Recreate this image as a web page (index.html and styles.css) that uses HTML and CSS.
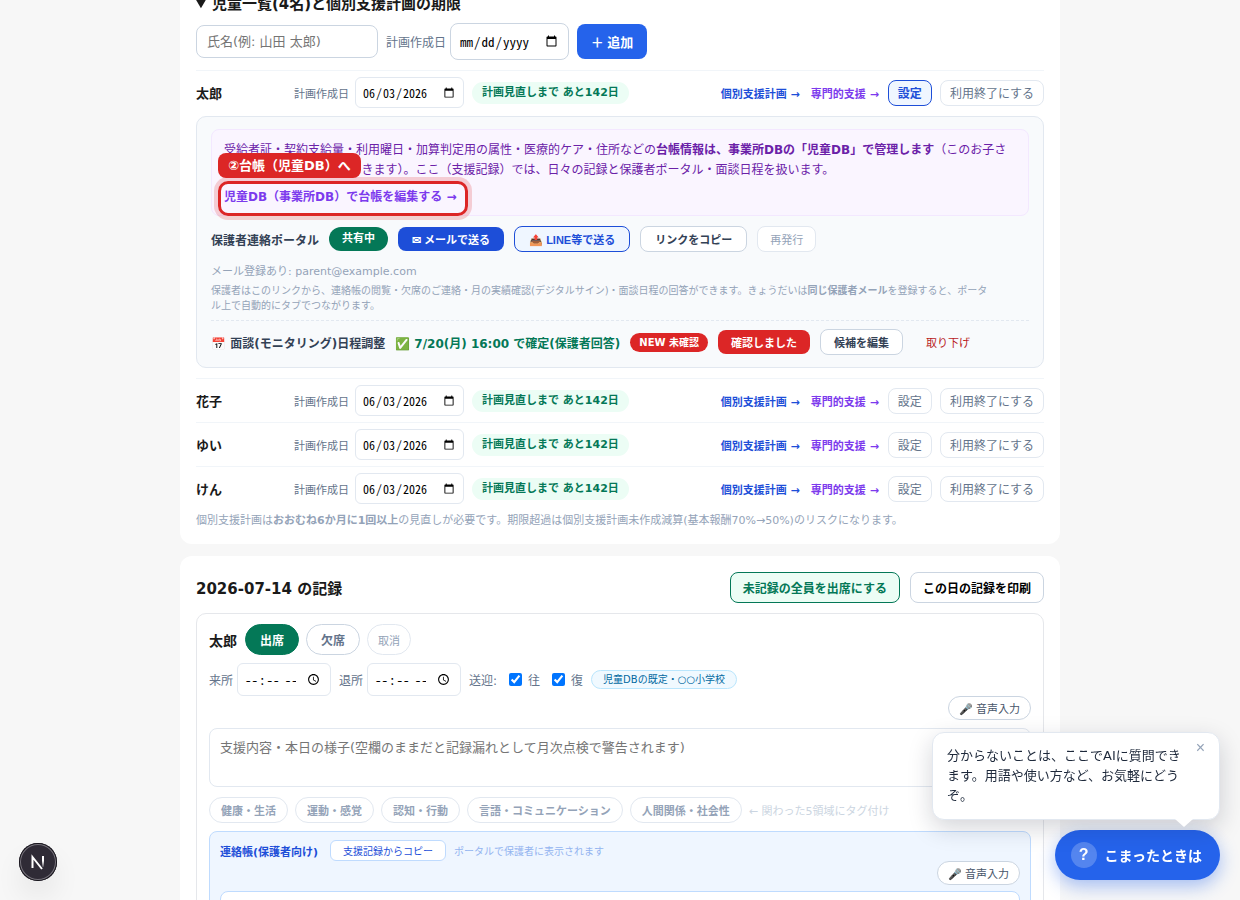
FILE: index.html
```html
<!DOCTYPE html>
<html lang="ja">
<head>
<meta charset="utf-8">
<meta name="viewport" content="width=device-width, initial-scale=1">
<title>支援記録</title>
<link rel="stylesheet" href="styles.css">
</head>

<body>
<main class="page">
	<section class="card">
		<details open>
			<summary>児童一覧(4名)と個別支援計画の期限</summary>
			<form class="add_form">
				<input type="text" class="add_name" placeholder="氏名(例: 山田 太郎)" aria-label="氏名">
				<label class="add_date">計画作成日 <input type="date"></label>
				<button type="button" class="btn_add">＋ 追加</button>
			</form>

			<div class="child">
				<div class="child_row">
					<span class="child_name">太郎</span>
					<label class="child_date">計画作成日 <input type="date" value="2026-06-03"></label>
					<span class="limit">計画見直しまで あと142日</span>
					<div class="child_links">
						<a href="#" class="plan">個別支援計画 →</a>
						<a href="#" class="special">専門的支援 →</a>
						<button type="button" class="btn_s on">設定</button>
						<button type="button" class="btn_s">利用終了にする</button>
					</div>
				</div>
				<div class="panel">
					<div class="notice">
						受給者証・契約支給量・利用曜日・加算判定用の属性・医療的ケア・住所などの<b>台帳情報は、事業所DBの「児童DB」で管理します</b>（このお子さんの設定もDBから編集できます）。ここ（支援記録）では、日々の記録と保護者ポータル・面談日程を扱います。
						<div class="guide">
							<a href="#">児童DB（事業所DB）で台帳を編集する →</a>
							<span class="guide_tip">②台帳（児童DB）へ</span>
							<span class="guide_ring"></span>
						</div>
					</div>
					<div class="portal">
						<b>保護者連絡ポータル</b>
						<span class="shared">共有中</span>
						<button type="button" class="btn_m blue">✉ メールで送る</button>
						<button type="button" class="btn_m line">📤 LINE等で送る</button>
						<button type="button" class="btn_m">リンクをコピー</button>
						<button type="button" class="btn_m pale">再発行</button>
					</div>
					<p class="mail">メール登録あり: parent@example.com</p>
					<p class="portal_note">保護者はこのリンクから、連絡帳の閲覧・欠席のご連絡・月の実績確認(デジタルサイン)・面談日程の回答ができます。きょうだいは<b>同じ保護者メール</b>を登録すると、ポータル上で自動的にタブでつながります。</p>
					<div class="meeting">
						<b>📅 面談(モニタリング)日程調整</b>
						<b class="fixed_date">✅ 7/20(月) 16:00 で確定(保護者回答)</b>
						<span class="new">NEW 未確認</span>
						<button type="button" class="btn_m red">確認しました</button>
						<button type="button" class="btn_m">候補を編集</button>
						<button type="button" class="btn_m cancel">取り下げ</button>
					</div>
				</div>
			</div>

			<div class="child">
				<div class="child_row">
					<span class="child_name">花子</span>
					<label class="child_date">計画作成日 <input type="date" value="2026-06-03"></label>
					<span class="limit">計画見直しまで あと142日</span>
					<div class="child_links">
						<a href="#" class="plan">個別支援計画 →</a>
						<a href="#" class="special">専門的支援 →</a>
						<button type="button" class="btn_s">設定</button>
						<button type="button" class="btn_s">利用終了にする</button>
					</div>
				</div>
			</div>

			<div class="child">
				<div class="child_row">
					<span class="child_name">ゆい</span>
					<label class="child_date">計画作成日 <input type="date" value="2026-06-03"></label>
					<span class="limit">計画見直しまで あと142日</span>
					<div class="child_links">
						<a href="#" class="plan">個別支援計画 →</a>
						<a href="#" class="special">専門的支援 →</a>
						<button type="button" class="btn_s">設定</button>
						<button type="button" class="btn_s">利用終了にする</button>
					</div>
				</div>
			</div>

			<div class="child">
				<div class="child_row">
					<span class="child_name">けん</span>
					<label class="child_date">計画作成日 <input type="date" value="2026-06-03"></label>
					<span class="limit">計画見直しまで あと142日</span>
					<div class="child_links">
						<a href="#" class="plan">個別支援計画 →</a>
						<a href="#" class="special">専門的支援 →</a>
						<button type="button" class="btn_s">設定</button>
						<button type="button" class="btn_s">利用終了にする</button>
					</div>
				</div>
			</div>
			<p class="list_note">個別支援計画は<b>おおむね6か月に1回以上</b>の見直しが必要です。期限超過は個別支援計画未作成減算(基本報酬70%→50%)のリスクになります。</p>
		</details>
	</section>

	<section class="card">
		<div class="record_head">
			<h2>2026-07-14 の記録</h2>
			<button type="button" class="btn_l green">未記録の全員を出席にする</button>
			<button type="button" class="btn_l">この日の記録を印刷</button>
		</div>
		<div class="record">
			<div class="attend">
				<b>太郎</b>
				<button type="button" class="btn_r on">出席</button>
				<button type="button" class="btn_r">欠席</button>
				<button type="button" class="btn_r undo">取消</button>
			</div>
			<div class="times">
				<label class="time">来所 <input type="time"></label>
				<label class="time">退所 <input type="time"></label>
				<span>送迎:</span>
				<label class="check"><input type="checkbox" checked> 往</label>
				<label class="check"><input type="checkbox" checked> 復</label>
				<span class="school">児童DBの既定・○○小学校</span>
			</div>
			<div class="voice"><button type="button">🎤 音声入力</button></div>
			<textarea class="memo" aria-label="支援内容" placeholder="支援内容・本日の様子(空欄のままだと記録漏れとして月次点検で警告されます)"></textarea>
			<div class="tags">
				<button type="button">健康・生活</button>
				<button type="button">運動・感覚</button>
				<button type="button">認知・行動</button>
				<button type="button">言語・コミュニケーション</button>
				<button type="button">人間関係・社会性</button>
				<span>← 関わった5領域にタグ付け</span>
			</div>
			<div class="contact">
				<div class="contact_head">
					<b>連絡帳(保護者向け)</b>
					<button type="button">支援記録からコピー</button>
					<span>ポータルで保護者に表示されます</span>
				</div>
				<div class="voice"><button type="button">🎤 音声入力</button></div>
				<textarea class="memo" aria-label="連絡帳"></textarea>
			</div>
		</div>
	</section>
</main>

<div class="help">
	<div class="bubble">
		<p>分からないことは、ここでAIに質問できます。用語や使い方など、お気軽にどうぞ。</p>
		<button type="button" aria-label="閉じる">×</button>
	</div>
	<button type="button" class="help_btn"><span>?</span>こまったときは</button>
</div>

<button type="button" class="dev" aria-label="開発ツール">
	<svg width="38" height="38" viewBox="0 0 38 38" fill="none">
		<defs>
			<linearGradient id="fade" x1="0" y1="13" x2="0" y2="25" gradientUnits="userSpaceOnUse">
				<stop offset="0.4" stop-color="#fff"/>
				<stop offset="1" stop-color="#fff" stop-opacity="0"/>
			</linearGradient>
		</defs>
		<path d="M13.5 25V14L23 26" stroke="#fff" stroke-width="2"/>
		<path d="M24 13v11" stroke="url(#fade)" stroke-width="2"/>
	</svg>
</button>
</body>
</html>
```
FILE: styles.css
```css
*{margin:0;padding:0;box-sizing:border-box;}
body{background:#f7f7f7;color:#1a1a1a;font-family:"DejaVu Sans","Noto Sans CJK JP",sans-serif;}
button{font-family:"Liberation Sans","Noto Sans CJK JP",sans-serif;cursor:pointer;}
input,textarea{font-family:"DejaVu Sans","Noto Sans CJK JP",sans-serif;}
a{text-decoration:none;}
.page{
	max-width:880px;
	margin:-23px auto 0;
	display:flex;
	flex-direction:column;
	gap:12px;
}
.card{
	background:#fff;
	border-radius:12px;
	padding:16px;
}
summary{
	font-size:15px;
	font-weight:bold;
	line-height:22px;
	cursor:pointer;
}
.add_form{
	display:flex;
	align-items:center;
	gap:8px;
	margin:8px 0 10px;
}
.add_name{
	width:182px;
	height:33px;
	border:1px solid #cbd5e1;
	border-radius:8px;
	padding:0 10px;
	font-size:13px;
}
.add_date,.child_date,.time{
	display:flex;
	align-items:center;
	gap:4px;
	font-size:12px;
	color:#64748b;
}
input[type="date"],input[type="time"]{
	font-family:"Noto Sans Mono CJK JP","Noto Sans CJK JP",monospace;
	background:#fff;
	border:1px solid #e2e8f0;
	border-radius:6px;
}
.add_date input[type="date"]{
	width:119px;
	height:37px;
	border-color:#cbd5e1;
	border-radius:8px;
	padding:0 8px;
	font-size:13px;
}
.btn_add{
	width:70px;
	height:35px;
	border:none;
	border-radius:8px;
	background:#2563eb;
	color:#fff;
	font-size:13px;
	font-weight:bold;
}

/* 児童の行 */
.child{
	border-top:1px solid #f1f5f9;
	padding:6px 0;
}
.child_row{
	display:flex;
	align-items:center;
	gap:8px;
}
.child_name{
	min-width:90px;
	font-size:13px;
	font-weight:bold;
}
.child_date{gap:6px;font-size:11px;}
.child_date input{
	width:109px;
	height:31px;
	padding:0 6px;
	font-size:12px;
}
.limit{
	background:#ecfdf5;
	color:#047857;
	border-radius:11px;
	padding:0 10px;
	font-size:11px;
	line-height:22px;
	font-weight:bold;
}
.child_links{
	display:flex;
	align-items:center;
	gap:8px;
	margin-left:auto;
	font-size:11px;
	font-weight:bold;
}
.plan{color:#1d4ed8;padding:0 2px;}
.special{color:#7c3aed;padding:0 1px;}
.btn_s{
	height:26px;
	border:1px solid #e2e8f0;
	border-radius:8px;
	background:#fff;
	color:#64748b;
	padding:0 9px;
	font-size:12px;
}
.btn_s.on{
	background:#eff6ff;
	border-color:#1d4ed8;
	color:#1d4ed8;
	font-weight:bold;
}

/* 設定パネル */
.panel{
	margin:8px 0 4px;
	background:#f8fafc;
	border:1px solid #e2e8f0;
	border-radius:10px;
	padding:12px 14px;
}
.notice{
	background:#faf5ff;
	border:1px solid #f3e8ff;
	border-radius:8px;
	padding:10px 12px 8px;
	color:#6b21a8;
	font-size:12px;
	line-height:20px;
}
.guide{
	position:relative;
	width:fit-content;
	margin-top:7px;
}
.guide a{
	color:#7c3aed;
	font-weight:bold;
}
.guide_ring{
	position:absolute;
	top:-6px;
	right:-12px;
	bottom:-9px;
	left:-6px;
	border:3px solid #dc2626;
	border-radius:10px;
	box-shadow:0 0 0 4px rgba(220,38,38,0.2);
	pointer-events:none;
}
.guide_tip{
	position:absolute;
	left:-6px;
	bottom:29px;
	background:#dc2626;
	color:#fff;
	border-radius:8px;
	padding:1px 10px 0;
	font-size:13px;
	font-weight:bold;
	line-height:24px;
	white-space:nowrap;
}
.portal,.meeting{
	display:flex;
	align-items:center;
	flex-wrap:wrap;
	gap:10px;
	color:#334155;
	font-size:12px;
}
.portal{margin-top:10px;}
.shared{
	background:#047857;
	color:#fff;
	border-radius:12px;
	padding:0 13px;
	font-size:11px;
	font-weight:bold;
	line-height:24px;
}
.btn_m{
	height:26px;
	border:1px solid #cbd5e1;
	border-radius:8px;
	background:#fff;
	color:#334155;
	padding:0 14px;
	font-size:11px;
	font-weight:bold;
}
.meeting .btn_m{padding:0 13px;}
.btn_m.blue{height:24px;background:#1d4ed8;border:none;color:#fff;}
.btn_m.line{background:#eff6ff;border-color:#1d4ed8;color:#1d4ed8;}
.btn_m.pale{border-color:#e2e8f0;color:#94a3b8;padding:0 12px;font-weight:normal;}
.btn_m.red{height:24px;background:#dc2626;border:none;color:#fff;}
.btn_m.cancel{background:none;border:none;color:#b91c1c;font-weight:normal;}
.mail{
	margin-top:11px;
	color:#94a3b8;
	font-size:11px;
	line-height:18px;
}
.portal_note{
	margin-top:2px;
	padding-right:40px;
	color:#94a3b8;
	font-size:10px;
	line-height:15px;
}
.meeting{
	margin-top:7px;
	border-top:1px dashed #e2e8f0;
	padding-top:8px;
}
.fixed_date{color:#047857;}
.new{
	background:#dc2626;
	color:#fff;
	border-radius:10px;
	padding:0 9px;
	font-size:10px;
	font-weight:bold;
	line-height:19px;
}
.list_note{
	margin-top:3px;
	color:#94a3b8;
	font-size:11px;
	line-height:15px;
}

/* 日々の記録 */
.record_head{
	display:flex;
	align-items:center;
	gap:10px;
}
.record_head h2{
	flex:1;
	font-size:15px;
}
.btn_l{
	height:31px;
	border:1px solid #cbd5e1;
	border-radius:8px;
	background:#fff;
	color:#000;
	padding:0 12px;
	font-size:12px;
	font-weight:bold;
}
.btn_l.green{background:#ecfdf5;border-color:#047857;color:#047857;}
.record{
	margin-top:10px;
	border:1px solid #e5e7eb;
	border-radius:10px;
	padding:10px 12px;
}
.attend{
	display:flex;
	align-items:center;
	gap:7px;
	font-size:14px;
}
.attend b{margin-right:1px;}
.btn_r{
	height:31px;
	border:1px solid #cbd5e1;
	border-radius:16px;
	background:#fff;
	color:#64748b;
	padding:0 14px;
	font-size:12px;
	font-weight:bold;
}
.btn_r.on{background:#047857;border-color:#047857;color:#fff;}
.btn_r.undo{border-color:#e2e8f0;color:#94a3b8;padding:0 10px;font-size:11px;font-weight:normal;}
.times{
	display:flex;
	align-items:center;
	flex-wrap:wrap;
	gap:8px;
	margin-top:8px;
	color:#64748b;
	font-size:12px;
}
.time input{
	width:94px;
	height:33px;
	padding:0 6px;
	font-size:13px;
}
.check{
	display:flex;
	align-items:center;
	gap:6px;
	padding-left:4px;
}
.check input{width:13px;height:13px;}
.school{
	background:#f0f9ff;
	border:1px solid #bae6fd;
	border-radius:10px;
	color:#0369a1;
	padding:0 11px;
	font-size:10px;
	line-height:17px;
}
.voice{
	display:flex;
	justify-content:flex-end;
}
.voice button{
	height:24px;
	border:1px solid #cbd5e1;
	border-radius:12px;
	background:#fff;
	color:#475569;
	padding:0 10px;
	font-size:11px;
}
.memo{
	display:block;
	width:100%;
	height:59px;
	margin-top:8px;
	border:1px solid #e2e8f0;
	border-radius:8px;
	padding:8px 10px;
	font-size:13px;
	resize:none;
}
.tags{
	display:flex;
	align-items:center;
	flex-wrap:wrap;
	gap:7px;
	margin-top:10px;
	color:#cbd5e1;
	font-size:11px;
}
.tags button{
	height:26px;
	border:1px solid #e2e8f0;
	border-radius:13px;
	background:#fff;
	color:#94a3b8;
	padding:0 11px;
	font-size:11px;
	font-weight:bold;
}
.contact{
	margin-top:8px;
	background:#eff6ff;
	border:1px solid #bfdbfe;
	border-radius:8px;
	padding:8px 10px;
}
.contact_head{
	display:flex;
	align-items:center;
	gap:8px;
	font-size:11px;
	color:#1d4ed8;
}
.contact_head b{margin-right:4px;}
.contact_head button{
	height:21px;
	border:1px solid #bfdbfe;
	border-radius:6px;
	background:#fff;
	color:#1d4ed8;
	padding:0 12px;
	font-size:10px;
}
.contact_head span{color:#93b4f0;font-size:10px;}
.contact .memo{border-color:#bfdbfe;margin-top:6px;}

/* ヘルプ */
.help{
	position:fixed;
	right:20px;
	bottom:20px;
	display:flex;
	flex-direction:column;
	align-items:flex-end;
	gap:10px;
}
.bubble{
	position:relative;
	display:flex;
	align-items:flex-start;
	width:288px;
	background:#fff;
	border:1px solid #e2e8f0;
	border-radius:12px;
	padding:13px 14px;
	box-shadow:0 8px 24px rgba(15,23,42,0.18);
	color:#1e293b;
	font-size:13px;
	line-height:20px;
}
.bubble:after{
	content:"";
	position:absolute;
	right:26px;
	bottom:-8px;
	border:solid transparent;
	border-width:8px 9px 0;
	border-top-color:#fff;
}
.bubble p{flex:1;}
.bubble button{
	width:24px;
	margin-top:-6px;
	border:none;
	background:none;
	color:#94a3b8;
	font-size:16px;
	line-height:1;
	text-align:right;
}
.help_btn{
	display:flex;
	align-items:center;
	gap:8px;
	height:50px;
	border:none;
	border-radius:25px;
	padding:0 18px 0 16px;
	background:#2563eb;
	box-shadow:0 6px 18px rgba(37,99,235,0.4);
	color:#fff;
	font-size:14px;
	font-weight:bold;
}
.help_btn span{
	width:26px;
	border-radius:50%;
	background:rgba(255,255,255,0.22);
	font-size:16px;
	line-height:26px;
}
.dev{
	position:fixed;
	left:19px;
	bottom:19px;
	width:38px;
	height:38px;
	border:none;
	border-radius:50%;
	background:#2f2b36;
	box-shadow:0 0 0 1px #15131a inset,0 0 0 2px #77737c inset,0 16px 32px -8px rgba(0,0,0,0.2);
}
.dev svg{display:block;}
```
